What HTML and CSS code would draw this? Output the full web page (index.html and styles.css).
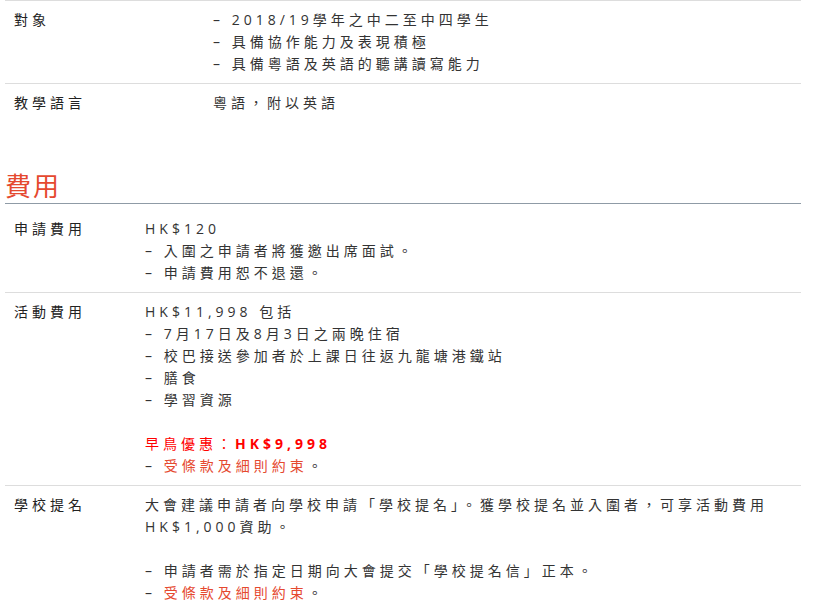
FILE: index.html
```html
<!DOCTYPE html>
<html lang="zh-Hant">
<head>
<meta charset="utf-8">
<title>費用</title>
<link rel="stylesheet" href="styles.css">
</head>
<body>
<div class="page">
  <dl class="info info-wide">
    <div class="row">
      <dt>對象</dt>
      <dd>
        <p>– 2018/19學年之中二至中四學生</p>
        <p>– 具備協作能力及表現積極</p>
        <p>– 具備粵語及英語的聽講讀寫能力</p>
      </dd>
    </div>
    <div class="row">
      <dt>教學語言</dt>
      <dd><p>粵語，附以英語</p></dd>
    </div>
  </dl>

  <h2 class="section-title">費用</h2>

  <dl class="info info-narrow">
    <div class="row">
      <dt>申請費用</dt>
      <dd>
        <p>HK$120</p>
        <p>– 入圍之申請者將獲邀出席面試。</p>
        <p>– 申請費用恕不退還。</p>
      </dd>
    </div>
    <div class="row">
      <dt>活動費用</dt>
      <dd>
        <p>HK$11,998 包括</p>
        <p>– 7月17日及8月3日之兩晚住宿</p>
        <p>– 校巴接送參加者於上課日往返九龍塘港鐵站</p>
        <p>– 膳食</p>
        <p>– 學習資源</p>
        <p class="gap"><span class="promo">早鳥優惠：<strong>HK$9,998</strong></span></p>
        <p>– <span class="terms">受條款及細則約束</span>。</p>
      </dd>
    </div>
    <div class="row">
      <dt>學校提名</dt>
      <dd>
        <p>大會建議申請者向學校申請「學校提名」。獲學校提名並入圍者，可享活動費用HK$1,000資助。</p>
        <p class="gap">– 申請者需於指定日期向大會提交「學校提名信」正本。</p>
        <p>– <span class="terms">受條款及細則約束</span>。</p>
      </dd>
    </div>
  </dl>
</div>
</body>
</html>
```

FILE: styles.css
```css
html, body {
  margin: 0;
  padding: 0;
  background: #fff;
}

body {
  font-family: "Open Sans", "Noto Sans CJK TC", sans-serif;
  font-size: 14px;
  line-height: 22px;
  letter-spacing: 4px;
  color: #333;
}

.page {
  margin-left: 5px;
  width: 796px;
}

.info {
  margin: 0;
}

.info .row {
  display: grid;
  padding: 8px 9px 8px;
  border-top: 1px solid #ddd;
}

.info-wide .row {
  grid-template-columns: 199px 1fr;
}

.info-narrow .row {
  grid-template-columns: 131px 1fr;
}

.info-narrow .row:first-child {
  border-top: none;
  padding-top: 14px;
}

.info dt {
  color: #222;
}

.info dd {
  margin: 0;
}

.info p {
  margin: 0;
}

.info p.gap {
  margin-top: 22px;
}

.promo {
  color: #f00;
}

.promo strong {
  font-weight: 700;
}

.terms {
  color: #e5492f;
}

.section-title {
  margin: 47px 0 0;
  font-size: 26px;
  line-height: 34px;
  font-weight: normal;
  letter-spacing: 2px;
  color: #e5492f;
  border-bottom: 1px solid #8f9ba6;
}
```
